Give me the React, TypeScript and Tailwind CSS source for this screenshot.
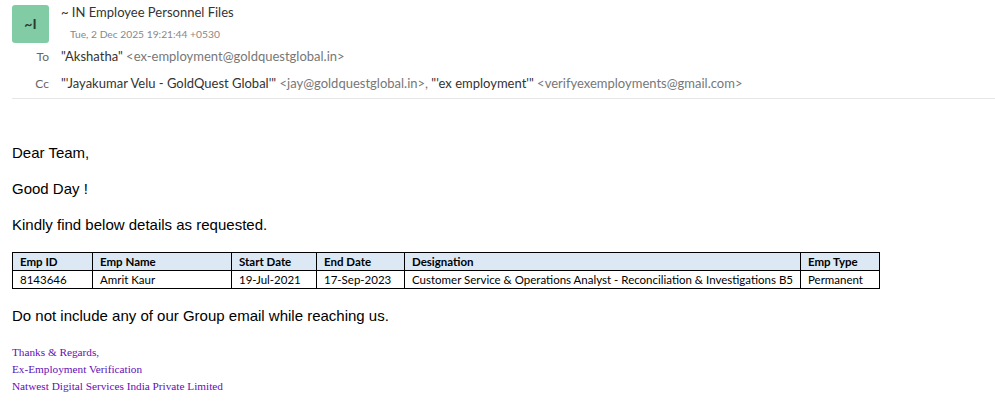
const columns = [
  { head: "Emp ID", value: "8143646", width: "w-[80px]" },
  { head: "Emp Name", value: "Amrit Kaur", width: "w-[139px]" },
  { head: "Start Date", value: "19-Jul-2021", width: "w-[85px]" },
  { head: "End Date", value: "17-Sep-2023", width: "w-[88px]" },
  { head: "Designation", value: "Customer Service & Operations Analyst - Reconciliation & Investigations B5", width: "w-[396px]" },
  { head: "Emp Type", value: "Permanent", width: "w-[79px]" },
];

const App = () => {
  return (
    <div className="min-h-[411px] bg-white font-['Liberation_Sans',sans-serif] text-black">
      <div className="pt-[5px] pl-3 font-['Lato',sans-serif]">
        <div className="flex gap-3">
          <div className="flex h-[38px] w-[37px] items-center justify-center rounded-[3px] bg-[#81cca5] pb-[1px] text-[14px] font-bold text-[#2b3a33]">~I</div>
          <div>
            <div className="text-[13px] leading-[14px] text-[#333333]">~ IN Employee Personnel Files</div>
            <div className="mt-[8px] ml-[9px] text-[10.25px] leading-[14px] text-[#888888]">Tue, 2 Dec 2025 19:21:44 +0530</div>
          </div>
        </div>
        <div className="mt-[1px] flex h-[26px] items-center text-[13px]">
          <span className="w-[37px] text-right text-[12px] text-[#666666]">To</span>
          <span className="ml-3 text-[#333333]">"Akshatha" <span className="text-[#777777]">&lt;ex-employment@goldquestglobal.in&gt;</span></span>
        </div>
        <div className="mt-[1px] flex h-[26px] items-center text-[13px]">
          <span className="w-[37px] text-right text-[12px] text-[#666666]">Cc</span>
          <span className="ml-3 text-[#333333]">"'Jayakumar Velu - GoldQuest Global'" <span className="text-[#777777]">&lt;jay@goldquestglobal.in&gt;,</span> "'ex employment'" <span className="text-[#777777]">&lt;verifyexemployments@gmail.com&gt;</span></span>
        </div>
        <div className="mt-[1px] h-px bg-[#e6e6e6]" />
      </div>

      <div className="px-3 text-[15px] leading-[18px]">
        <p className="mt-[45px]">Dear Team,</p>
        <p className="mt-[18px]">Good Day !</p>
        <p className="mt-[18px]">Kindly find below details as requested.</p>

        <table className="mt-[18px] w-[868px] table-fixed border-collapse font-['Lato',sans-serif] text-[11.5px] leading-[17px]">
          <thead>
            <tr>
              {columns.map((col) => (
                <th key={col.head} className={`${col.width} border border-black bg-[#dce9f5] px-[7px] py-0 text-left font-bold`}>{col.head}</th>
              ))}
            </tr>
          </thead>
          <tbody>
            <tr>
              {columns.map((col) => (
                <td key={col.head} className="whitespace-nowrap border border-black px-[7px] py-0">{col.value}</td>
              ))}
            </tr>
          </tbody>
        </table>

        <p className="mt-[18px]">Do not include any of our Group email while reaching us.</p>

        <div className="mt-[19px] font-['Liberation_Serif',serif] text-[11.25px] leading-[17px] text-[#5f0fb8]">
          <div>Thanks &amp; Regards,</div>
          <div>Ex-Employment Verification</div>
          <div>Natwest Digital Services India Private Limited</div>
        </div>
      </div>
    </div>
  );
};

export default App;
